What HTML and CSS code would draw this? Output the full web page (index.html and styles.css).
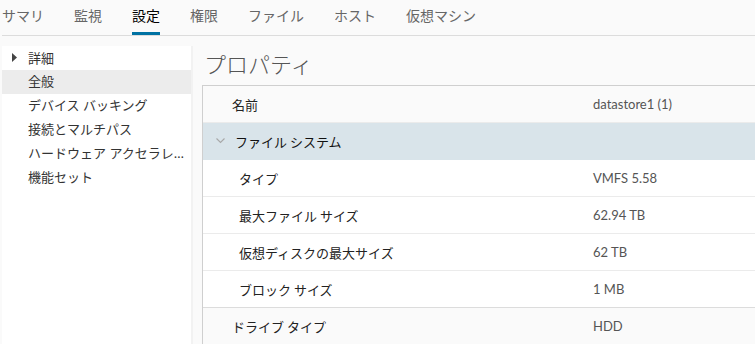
FILE: index.html
```html
<!DOCTYPE html>
<html lang="ja">
<head>
<meta charset="utf-8">
<title>設定</title>
<link rel="stylesheet" href="styles.css">
</head>
<body>
<div class="page">
  <nav class="tabs">
    <span class="tab">サマリ</span>
    <span class="tab">監視</span>
    <span class="tab active">設定</span>
    <span class="tab">権限</span>
    <span class="tab">ファイル</span>
    <span class="tab">ホスト</span>
    <span class="tab">仮想マシン</span>
  </nav>
  <div class="content">
    <aside class="sidebar">
      <div class="side-item group"><svg class="caret" width="5" height="9" viewBox="0 0 5 9"><path d="M0 0 L5 4.5 L0 9 Z" fill="#444"/></svg><span>詳細</span></div>
      <div class="side-item selected">全般</div>
      <div class="side-item">デバイス バッキング</div>
      <div class="side-item">接続とマルチパス</div>
      <div class="side-item">ハードウェア アクセラレーション</div>
      <div class="side-item">機能セット</div>
    </aside>
    <main class="main">
      <h1 class="title">プロパティ</h1>
      <div class="props">
        <div class="row top">
          <div class="label">名前</div>
          <div class="value">datastore1 (1)</div>
        </div>
        <div class="row section">
          <div class="label"><svg class="chev" width="9" height="6" viewBox="0 0 9 6"><path d="M0.5 0.5 L4.5 4.5 L8.5 0.5" fill="none" stroke="#a8a8a8" stroke-width="1.1"/></svg>ファイル システム</div>
          <div class="value"></div>
        </div>
        <div class="row sub">
          <div class="label">タイプ</div>
          <div class="value">VMFS 5.58</div>
        </div>
        <div class="row sub">
          <div class="label">最大ファイル サイズ</div>
          <div class="value">62.94 TB</div>
        </div>
        <div class="row sub">
          <div class="label">仮想ディスクの最大サイズ</div>
          <div class="value">62 TB</div>
        </div>
        <div class="row sub last">
          <div class="label">ブロック サイズ</div>
          <div class="value">1 MB</div>
        </div>
        <div class="row top drive">
          <div class="label">ドライブ タイプ</div>
          <div class="value">HDD</div>
        </div>
      </div>
    </main>
  </div>
</div>
</body>
</html>
```

FILE: styles.css
```css
html, body {
  margin: 0;
  padding: 0;
  height: 100%;
  overflow: hidden;
  background: #fafafa;
}
body {
  font-family: "Noto Sans CJK JP", "Noto Sans", sans-serif;
  color: #333;
}
.page {
  padding-left: 2px;
}
.tabs {
  display: flex;
  gap: 30px;
  height: 35px;
  border-bottom: 1px solid #dcdcdc;
}
.tab {
  font-size: 14px;
  line-height: 31px;
  height: 32px;
  color: #666;
  border-bottom: 3px solid transparent;
}
.tab.active {
  color: #000;
  border-bottom-color: #0072a3;
}
.content {
  display: flex;
  margin-top: 10px;
}
.sidebar {
  width: 189px;
  flex: none;
  background: #fff;
  border-right: 2px solid #f2f2f2;
  min-height: 320px;
}
.side-item {
  height: 24px;
  line-height: 23px;
  font-size: 13px;
  font-family: "Noto Sans", "Noto Sans CJK JP", sans-serif;
  color: #333;
  padding-left: 26px;
  padding-right: 3px;
  white-space: nowrap;
  overflow: hidden;
  text-overflow: ellipsis;
}
.side-item.group {
  display: flex;
  align-items: center;
  padding-left: 10px;
}
.caret {
  margin-right: 11px;
  margin-top: -1px;
}
.side-item.selected {
  background: #ececec;
}
.main {
  flex: 1;
  margin-left: 9px;
  min-width: 0;
}
.title {
  margin: 0 0 3px 2px;
  font-size: 22px;
  font-weight: 300;
  line-height: 35px;
  height: 36px;
  color: #555;
}
.props {
  border-top: 1px solid #cfcfcf;
  border-left: 1px solid #cfcfcf;
}
.row {
  display: flex;
  height: 36px;
  align-items: center;
  font-size: 13px;
  border-bottom: 1px solid #ebebeb;
  background: #fff;
}
.row.top {
  background: #fafafa;
}
.row.section {
  background: #d9e4ea;
  border-bottom-color: #d9e4ea;
}
.row.last {
  border-bottom-color: #dcdcdc;
}
.label {
  width: 390px;
  flex: none;
  box-sizing: border-box;
  padding-left: 29px;
  color: #222;
  display: flex;
  align-items: center;
}
.row.sub .label {
  padding-left: 36px;
}
.row.section .label {
  padding-left: 13px;
  color: #111;
}
.chev {
  margin-right: 10px;
}
.value {
  font-family: "Lato", "Open Sans", sans-serif;
  font-size: 13px;
  color: #555;
}
```
